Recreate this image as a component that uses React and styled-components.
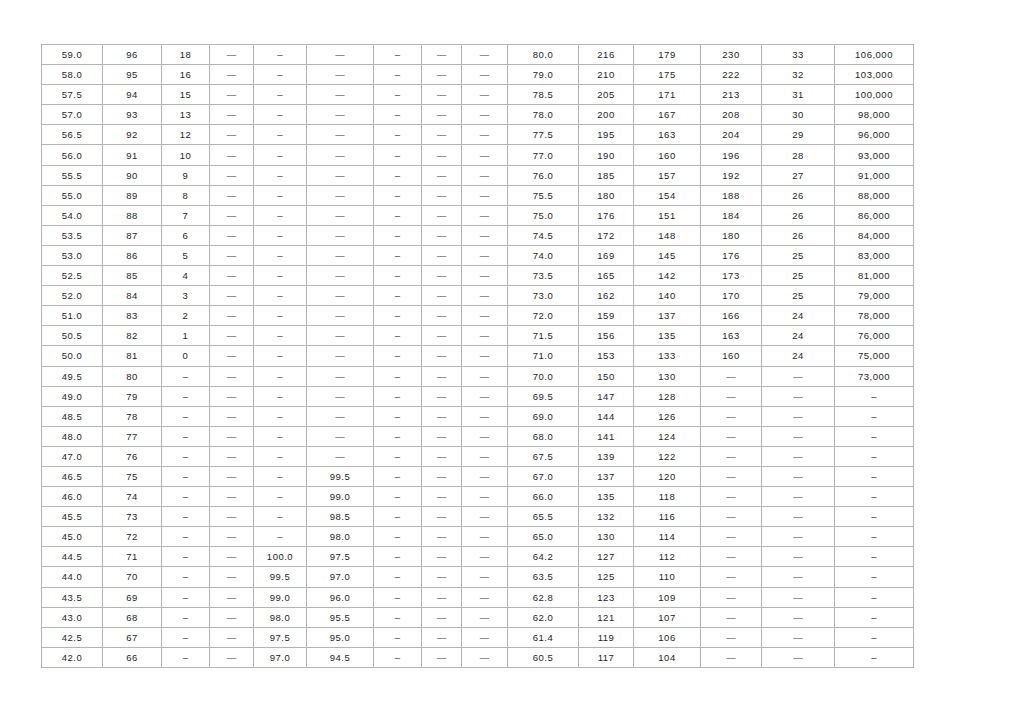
import React from "react"
import styled, { createGlobalStyle } from 'styled-components'

const GlobalStyle = createGlobalStyle`
  html, body {
    margin: 0;
    padding: 0;
    background: #ffffff;
  }
`

const widths = [61, 59, 48, 44, 53, 67, 48, 40, 46, 71, 55, 67, 61, 73, 79]

// dash used when a cell is empty, per column (short or long)
const S = '\u2013'
const L = '\u2014'
const blanks = [S, '', S, L, S, L, S, L, L, '', '', '', L, L, S]

const rows = [
  ['59.0', '96', '18', , , , , , , '80.0', '216', '179', '230', '33', '106,000'],
  ['58.0', '95', '16', , , , , , , '79.0', '210', '175', '222', '32', '103,000'],
  ['57.5', '94', '15', , , , , , , '78.5', '205', '171', '213', '31', '100,000'],
  ['57.0', '93', '13', , , , , , , '78.0', '200', '167', '208', '30', '98,000'],
  ['56.5', '92', '12', , , , , , , '77.5', '195', '163', '204', '29', '96,000'],
  ['56.0', '91', '10', , , , , , , '77.0', '190', '160', '196', '28', '93,000'],
  ['55.5', '90', '9', , , , , , , '76.0', '185', '157', '192', '27', '91,000'],
  ['55.0', '89', '8', , , , , , , '75.5', '180', '154', '188', '26', '88,000'],
  ['54.0', '88', '7', , , , , , , '75.0', '176', '151', '184', '26', '86,000'],
  ['53.5', '87', '6', , , , , , , '74.5', '172', '148', '180', '26', '84,000'],
  ['53.0', '86', '5', , , , , , , '74.0', '169', '145', '176', '25', '83,000'],
  ['52.5', '85', '4', , , , , , , '73.5', '165', '142', '173', '25', '81,000'],
  ['52.0', '84', '3', , , , , , , '73.0', '162', '140', '170', '25', '79,000'],
  ['51.0', '83', '2', , , , , , , '72.0', '159', '137', '166', '24', '78,000'],
  ['50.5', '82', '1', , , , , , , '71.5', '156', '135', '163', '24', '76,000'],
  ['50.0', '81', '0', , , , , , , '71.0', '153', '133', '160', '24', '75,000'],
  ['49.5', '80', , , , , , , , '70.0', '150', '130', , , '73,000'],
  ['49.0', '79', , , , , , , , '69.5', '147', '128', , , ],
  ['48.5', '78', , , , , , , , '69.0', '144', '126', , , ],
  ['48.0', '77', , , , , , , , '68.0', '141', '124', , , ],
  ['47.0', '76', , , , , , , , '67.5', '139', '122', , , ],
  ['46.5', '75', , , , '99.5', , , , '67.0', '137', '120', , , ],
  ['46.0', '74', , , , '99.0', , , , '66.0', '135', '118', , , ],
  ['45.5', '73', , , , '98.5', , , , '65.5', '132', '116', , , ],
  ['45.0', '72', , , , '98.0', , , , '65.0', '130', '114', , , ],
  ['44.5', '71', , , '100.0', '97.5', , , , '64.2', '127', '112', , , ],
  ['44.0', '70', , , '99.5', '97.0', , , , '63.5', '125', '110', , , ],
  ['43.5', '69', , , '99.0', '96.0', , , , '62.8', '123', '109', , , ],
  ['43.0', '68', , , '98.0', '95.5', , , , '62.0', '121', '107', , , ],
  ['42.5', '67', , , '97.5', '95.0', , , , '61.4', '119', '106', , , ],
  ['42.0', '66', , , '97.0', '94.5', , , , '60.5', '117', '104', , , ],
]

export default function App() {
  return (
    <Page>
      <GlobalStyle />
      <Table>
        <colgroup>
          {widths.map((w, i) => <col key={i} style={{ width: w }} />)}
        </colgroup>
        <tbody>
          {rows.map((row, r) => (
            <Row key={r}>
              {widths.map((_, c) => {
                const v = row[c]
                return v
                  ? <Cell key={c}>{v}</Cell>
                  : <Cell key={c} $dash>{blanks[c]}</Cell>
              })}
            </Row>
          ))}
        </tbody>
      </Table>
    </Page>
  )
}

const Page = styled.div`
  padding: 44px 0 0 41px;
`

const Table = styled.table`
  width: 872px;
  table-layout: fixed;
  border-collapse: collapse;
  border: 1px solid #a9a9a9;
  font-family: "Liberation Sans", Arial, sans-serif;
  font-size: 9.5px;
  color: #1e1e1e;
`

const Row = styled.tr`
  height: 20.1px;
`

const Cell = styled.td`
  padding: 0;
  text-align: center;
  vertical-align: middle;
  border: 1px solid #b4b4b4;
  letter-spacing: ${p => p.$dash ? '0' : '0.5px'};
  color: ${p => p.$dash ? '#3a3a3a' : '#1e1e1e'};
  white-space: nowrap;
`
